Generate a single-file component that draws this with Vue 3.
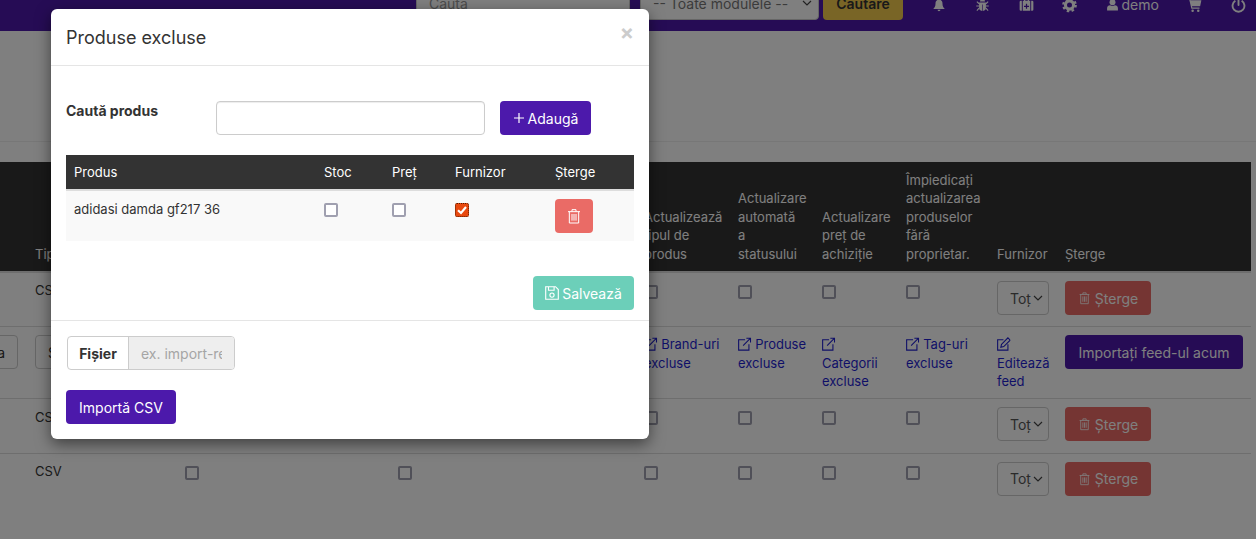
<script setup>
const rows = [
  { h: 'r1', del: true },
  { h: 'r2', links: true },
  { h: 'r1', del: true },
  { h: 'r1', del: true }
]
const links = [
  { t: 'Brand-uri excluse', i: 'ext' },
  { t: 'Produse excluse', i: 'ext' },
  { t: 'Categorii excluse', i: 'ext', br: true },
  { t: 'Tag-uri excluse', i: 'ext' },
  { t: 'Editează feed', i: 'edit', br: true }
]
const modalCols = ['Produs', 'Stoc', 'Preț', 'Furnizor', 'Șterge']
</script>

<template>
  <div class="page">
    <svg class="sprite" aria-hidden="true">
      <symbol id="bell" viewBox="0 0 24 24"><path fill="currentColor" d="M12 1a1.8 1.8 0 0 0-1.8 2C7 4 6 6.500 6 10c0 4.500-1.500 6.500-4 9h20c-2.500-2.500-4-4.500-4-9 0-3.500-1-6-4.200-7A1.800 1.800 0 0 0 12 1zM9.500 20a2.500 2.500 0 0 0 5 0z"/></symbol>
      <symbol id="bug" viewBox="0 0 24 24"><path fill="currentColor" d="M8 6.500a4 4 0 0 1 8 0zM6.500 8h11v8a5.500 5.500 0 0 1-5 5.500V11h-1v10.500a5.500 5.500 0 0 1-5-5.500z"/><path stroke="currentColor" stroke-width="1.800" fill="none" d="M6.500 10 3 6.500M17.500 10 21 6.500M6.500 13.500H2M17.500 13.500H22M6.500 17 3 21M17.500 17 21 21"/></symbol>
      <symbol id="medkit" viewBox="0 0 24 24"><path fill="currentColor" fill-rule="evenodd" d="M8 5V3.500A1.500 1.500 0 0 1 9.500 2h5A1.500 1.500 0 0 1 16 3.500V5h2v16H6V5zm2 0h4V4h-4zm1 5v3H8v2h3v3h2v-3h3v-2h-3v-3z"/><path fill="currentColor" d="M1 7a2 2 0 0 1 2-2h1.500v16H3a2 2 0 0 1-2-2zM23 7a2 2 0 0 0-2-2h-1.500v16H21a2 2 0 0 0 2-2z"/></symbol>
      <symbol id="cog" viewBox="0 0 24 24"><circle cx="12" cy="12" r="6.500" fill="none" stroke="currentColor" stroke-width="5"/><circle cx="12" cy="12" r="10" fill="none" stroke="currentColor" stroke-width="3.500" stroke-dasharray="4 3.850"/></symbol>
      <symbol id="user" viewBox="0 0 24 24"><circle cx="12" cy="7" r="5.500" fill="currentColor"/><path fill="currentColor" d="M2 22v-4c0-3.500 2.500-5.500 5.500-5.500 1.500 1 3 1.500 4.500 1.500s3-.5 4.500-1.500c3 0 5.500 2 5.500 5.500v4z"/></symbol>
      <symbol id="cart" viewBox="0 0 24 24"><path fill="currentColor" d="M1 2h4l.7 2.500H23l-2 9.500H8l.5 2H20v2H7L3.700 4H1z"/><circle cx="9" cy="21" r="2" fill="currentColor"/><circle cx="18" cy="21" r="2" fill="currentColor"/></symbol>
      <symbol id="power" viewBox="0 0 24 24"><path fill="none" stroke="currentColor" stroke-width="3" d="M7 5.200a9.500 9.500 0 1 0 10 0"/><path stroke="currentColor" stroke-width="3" stroke-linecap="round" d="M12 2v10"/></symbol>
      <symbol id="trash" viewBox="0 0 24 24"><path fill="none" stroke="currentColor" stroke-width="1.500" d="M3 5.500h18M9 5.500V2.500h6v3M5 5.500V22.500h14V5.500M9 9v10M12 9v10M15 9v10"/></symbol>
      <symbol id="ext" viewBox="2 1 21 21"><path fill="none" stroke="currentColor" stroke-width="1.700" d="M13 5H3v16h16v-9M10 14 21.500 2.500M15 2.500h6.500V9"/></symbol>
      <symbol id="edit" viewBox="2 1 21 21"><path fill="none" stroke="currentColor" stroke-width="1.700" d="M12 5H3v16h16v-9M9 12 19 2l3.500 3.500-10 10L8 16.500z"/></symbol>
      <symbol id="save" viewBox="2 2 20 20"><path fill="none" stroke="currentColor" stroke-width="1.600" d="M3 3h14l4 4v14H3zM7 3v5h8V3"/><circle cx="12" cy="15" r="3" fill="none" stroke="currentColor" stroke-width="1.600"/></symbol>
      <symbol id="plus" viewBox="0 0 24 24"><path stroke="currentColor" stroke-width="2.400" d="M12 2v20M2 12h20"/></symbol>
    </svg>

    <header class="nav">
      <input class="nav-input" placeholder="Caută" />
      <select class="nav-select"><option>-- Toate modulele --</option></select>
      <button class="nav-search">Căutare</button>
      <div class="nav-icons">
        <svg class="ni bell"><use href="#bell" /></svg>
        <svg class="ni"><use href="#bug" /></svg>
        <svg class="ni"><use href="#medkit" /></svg>
        <svg class="ni"><use href="#cog" /></svg>
        <span class="demo"><svg class="ni u"><use href="#user" /></svg>demo</span>
        <svg class="ni"><use href="#cart" /></svg>
        <svg class="ni"><use href="#power" /></svg>
      </div>
    </header>

    <div class="band"></div>

    <section class="feeds">
      <div class="fhead">
        <span></span>
        <span>Tip</span>
        <span>Actualizează stocul</span>
        <span>Actualizează prețul</span>
        <span>Actualizează<br />tipul de<br />produs</span>
        <span>Actualizare<br />automată<br />a<br />statusului</span>
        <span>Actualizare<br />preț de<br />achiziție</span>
        <span>Împiedicați<br />actualizarea<br />produselor<br />fără<br />proprietar.</span>
        <span>Furnizor</span>
        <span>Șterge</span>
      </div>
      <div v-for="(r, n) in rows" :key="n" class="frow" :class="[r.h, { last: n === 3 }]">
        <template v-if="r.del">
          <span></span>
          <span class="csv">CSV</span>
          <span class="cell"><i class="box"></i></span>
          <span class="cell"><i class="box"></i></span>
          <span class="cell"><i class="box"></i></span>
          <span class="cell"><i class="box"></i></span>
          <span class="cell"><i class="box"></i></span>
          <span class="cell"><i class="box"></i></span>
          <span><select class="mini"><option>Toț</option></select></span>
          <span><button class="btn-del"><svg class="ic tr"><use href="#trash" /></svg>Șterge</button></span>
        </template>
        <template v-else>
          <span class="left-btn"><button class="ghost">Previzualiza</button></span>
          <span><button class="ghost">Salvează</button></span>
          <span></span>
          <span></span>
          <a v-for="l in links" :key="l.t" class="flink">
            <svg class="ic"><use :href="'#' + l.i" /></svg><br v-if="l.br" />
            {{ l.t }}
          </a>
          <span class="imp"><button class="btn-imp">Importați feed-ul acum</button></span>
        </template>
      </div>
    </section>

    <div class="backdrop">
      <div class="modal">
        <div class="m-head">
          <h4>Produse excluse</h4>
          <span class="close">×</span>
        </div>
        <div class="m-body">
          <div class="search">
            <label>Caută produs</label>
            <input class="field" />
            <button class="btn-p add"><svg class="ic plus"><use href="#plus" /></svg>Adaugă</button>
          </div>
          <div class="m-table">
            <div class="m-tr m-th">
              <span v-for="c in modalCols" :key="c">{{ c }}</span>
            </div>
            <div class="m-tr m-td">
              <span class="pname">adidasi damda gf217 36</span>
              <span><i class="mbox"></i></span>
              <span><i class="mbox"></i></span>
              <span>
                <i class="mbox on">
                  <svg viewBox="0 0 14 14"><path d="M3 7.200 6 10l5-6" fill="none" stroke="#fff" stroke-width="2.200" /></svg>
                </i>
              </span>
              <span><button class="m-del"><svg class="ic del"><use href="#trash" /></svg></button></span>
            </div>
          </div>
          <div class="save-row">
            <button class="btn-save"><svg class="ic"><use href="#save" /></svg>Salvează</button>
          </div>
        </div>
        <div class="m-foot">
          <div class="file">
            <span class="file-btn">Fișier</span>
            <span class="file-name"><span class="file-clip">ex. import-re</span></span>
          </div>
          <button class="btn-p imp-csv">Importă CSV</button>
        </div>
      </div>
    </div>
  </div>
</template>

<style>
html, body { margin: 0; overflow: hidden; background: #fff; }
</style>

<style scoped>
.page {
  position: relative;
  height: 539px;
  overflow: hidden;
  font-family: Inter, "Liberation Sans", sans-serif;
  font-size: 13px;
  line-height: 1.42857;
  color: #333;
}
.sprite { display: none; }

/* top bar */
.nav {
  height: 31px;
  box-sizing: border-box;
  background: #4c19ab;
  display: flex;
  align-items: flex-end;
  padding: 0 0 11px 416px;
}
.nav-input {
  width: 214px;
  height: 34px;
  box-sizing: border-box;
  padding: 1px 12px 0;
  border: 1px solid #ccc;
  border-radius: 4px;
  font: 14px Inter, sans-serif;
  flex: none;
}
.nav-input::placeholder { color: #999; }
.nav-select {
  width: 179px;
  height: 34px;
  margin-left: 10px;
  padding-left: 12px;
  border: 1px solid #ccc;
  border-radius: 4px;
  color: #777;
  font: 14px Inter, sans-serif;
  flex: none;
  appearance: none;
  background: #fff url("data:image/svg+xml,%3Csvg xmlns='http://www.w3.org/2000/svg' width='10' height='6'%3E%3Cpath d='M1 1l4 4 4-4' fill='none' stroke='%23444' stroke-width='1.200'/%3E%3C/svg%3E") no-repeat right 6px center;
}
.nav-search {
  width: 80px;
  height: 34px;
  margin-left: 4px;
  border: 0;
  border-radius: 4px;
  background: #f2cb4d;
  color: #333;
  font: 600 14px Inter, sans-serif;
  flex: none;
}
.nav-icons {
  display: flex;
  align-items: center;
  height: 20px;
  margin-bottom: 5px;
  color: #fff;
  margin-left: 29px;
  font-size: 14px;
  flex: none;
}
.ni { width: 15px; height: 16px; display: block; flex: none; margin-right: 28.500px; }
.ni.bell { width: 14px; margin-right: 29px; }
.demo { display: flex; align-items: center; gap: 3px; margin-right: 28.500px; color: #fff; }
.demo .u { width: 13px; margin-right: 0; }

.band {
  height: 111px;
  box-sizing: border-box;
  border-bottom: 1px solid #eee;
  margin-bottom: 20px;
}

/* background table */
.feeds {
  width: 1324px;
  margin-left: -73px;
}
.fhead, .frow {
  display: grid;
  grid-template-columns: 100px 150px 213px 246px 94px 84px 84px 91px 68px 194px;
}
.fhead {
  height: 111px;
  box-sizing: border-box;
  background: #333;
  color: #fff;
  border-bottom: 2px solid #ddd;
  align-items: end;
  padding-bottom: 8px;
  line-height: 18.400px;
}
.fhead span { padding-left: 8px; }
.frow { border-bottom: 1px solid #ddd; padding-top: 8px; box-sizing: border-box; line-height: 18.500px; }
.frow > * { padding-left: 8px; box-sizing: border-box; min-width: 0; }
.r1 { height: 54.400px; }
.r2 { height: 72px; }
.last { border-bottom: 0; }
.box, .mbox {
  display: block;
  width: 14px;
  height: 14px;
  box-sizing: border-box;
  border: 2px solid #a0a0b0;
  border-radius: 2px;
  background: #fff;
}
.cell .box { margin-top: 4px; }
.csv { padding-top: .4px; }
.mini {
  width: 52px;
  height: 34px;
  padding: 0 0 0 12px;
  border: 1px solid #ccc;
  border-radius: 4px;
  color: #555;
  font: 14px Inter, sans-serif;
  appearance: none;
  background: #fff url("data:image/svg+xml,%3Csvg xmlns='http://www.w3.org/2000/svg' width='10' height='6'%3E%3Cpath d='M1 1l4 4 4-4' fill='none' stroke='%23444' stroke-width='1.200'/%3E%3C/svg%3E") no-repeat right 5px center;
}
.btn-del {
  width: 86px;
  height: 34px;
  padding: 0;
  border: 0;
  border-radius: 4px;
  background: #ea6b66;
  color: #fff;
  font: 14px Inter, sans-serif;
  display: flex;
  align-items: center;
  justify-content: center;
  gap: 4px;
}
.ic { width: 14px; height: 14px; flex: none; }
.ic.tr { width: 13px; height: 16px; }
.left-btn { display: flex; justify-content: flex-end; padding-right: 9px; }
.ghost {
  height: 34px;
  padding: 0 12px;
  border: 1px solid #ccc;
  border-radius: 4px;
  background: #fff;
  font: 14px Inter, sans-serif;
  color: #333;
  white-space: nowrap;
  flex: none;
}
.flink { color: #1f1fd0; padding-right: 6px; }
.flink .ic { vertical-align: -2px; width: 13.500px; height: 14px; }
.btn-imp {
  width: 178px;
  height: 34px;
  border: 0;
  padding: 0;
  border-radius: 4px;
  background: #4c19ab;
  color: #fff;
  font: 14px Inter, sans-serif;
}

/* modal */
.backdrop {
  position: absolute;
  inset: 0;
  background: rgba(0, 0, 0, .5);
  padding: 9px 0 0 51px;
}
.modal {
  width: 598px;
  height: 430px;
  background: #fff;
  border-radius: 6px;
  box-shadow: 0 5px 15px rgba(0, 0, 0, .5);
  display: flex;
  flex-direction: column;
}
.m-head {
  height: 57px;
  box-sizing: border-box;
  border-bottom: 1px solid #e5e5e5;
  padding: 15px;
  display: flex;
  justify-content: space-between;
}
.m-head h4 {
  margin: 0;
  font-size: 18px;
  font-weight: 400;
  line-height: 27px;
  color: #333;
}
.close {
  font: 700 21px/20px Inter, sans-serif;
  color: #ccc;
  margin: -1px 0 0;
}
.m-body {
  height: 255px;
  box-sizing: border-box;
  padding: 35px 15px 0;
  border-bottom: 1px solid #e5e5e5;
}
.search { display: flex; align-items: flex-start; height: 54px; }
.search label { width: 150px; font-size: 14px; font-weight: 700; line-height: 20px; }
.field {
  width: 269px;
  height: 34px;
  box-sizing: border-box;
  padding: 0 12px;
  border: 1px solid #ccc;
  border-radius: 4px;
  box-shadow: inset 0 1px 1px rgba(0, 0, 0, .075);
}
.btn-p {
  height: 34px;
  border: 0;
  border-radius: 4px;
  background: #4c19ab;
  color: #fff;
  font: 14px Inter, sans-serif;
  padding: 0;
}
.add {
  width: 91px;
  margin-left: 15px;
  display: flex;
  align-items: center;
  justify-content: center;
  gap: 3px;
}
.plus { width: 12px; height: 12px; }
.m-tr {
  display: grid;
  grid-template-columns: 250px 68px 63px 100px 87px;
}
.m-tr > span { padding-left: 8px; }
.m-th {
  height: 36px;
  box-sizing: border-box;
  background: #333;
  color: #fff;
  border-bottom: 2px solid #ddd;
  align-items: center;
}
.m-td {
  height: 50px;
  box-sizing: border-box;
  background: #f9f9f9;
  padding-top: 8px;
}
.pname { padding-top: 1px; }
.mbox { margin-top: 4px; }
.mbox.on {
  position: relative;
  border: 1px dotted #5a1c00;
  background: #e8490f;
}
.mbox.on svg { position: absolute; inset: -1px; width: 14px; height: 14px; }
.m-del {
  width: 38px;
  height: 34px;
  border: 0;
  padding: 0;
  border-radius: 4px;
  background: #ea6b66;
  color: #fff;
  display: flex;
  align-items: center;
  justify-content: center;
}
.del { width: 16px; height: 18px; }
.save-row { display: flex; justify-content: flex-end; margin-top: 35px; }
.btn-save {
  width: 101px;
  height: 34px;
  border: 0;
  padding: 0;
  border-radius: 4px;
  background: #6ccfb9;
  color: #fff;
  font: 14px Inter, sans-serif;
  display: flex;
  align-items: center;
  justify-content: center;
  gap: 3px;
}
.m-foot { padding: 15px 15px 0; }
.file {
  display: flex;
  width: 168px;
  height: 34px;
  box-sizing: border-box;
  margin-left: 1px;
  border: 1px solid #ccc;
  border-radius: 4px;
  overflow: hidden;
  font-size: 14px;
  line-height: 34px;
}
.file-btn {
  width: 61px;
  flex: none;
  box-sizing: border-box;
  text-align: center;
  font-weight: 700;
  border-right: 1px solid #ccc;
}
.file-name {
  flex: 1;
  min-width: 0;
  padding-left: 12px;
  background: #eee;
  color: #a5a5a5;
}
.file-clip {
  display: block;
  width: 81px;
  overflow: hidden;
  white-space: nowrap;
}
.imp-csv { display: block; width: 110px; margin-top: 20px; }
</style>
